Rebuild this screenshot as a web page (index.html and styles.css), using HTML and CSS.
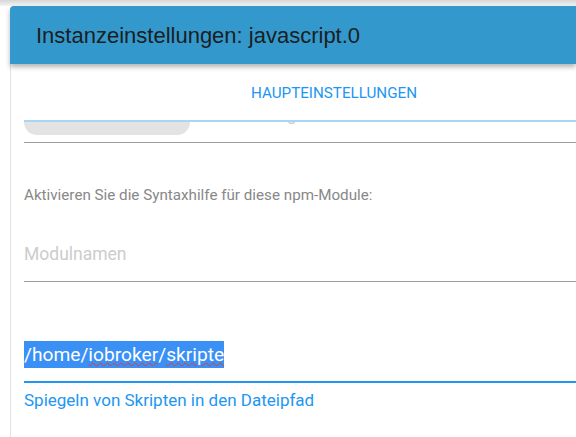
FILE: index.html
```html
<!DOCTYPE html>
<html lang="de">
<head>
  <meta charset="UTF-8">
  <title>Instanzeinstellungen</title>
  <link rel="stylesheet" href="styles.css">
</head>
<body>
  <div class="backdrop"></div>

  <div class="dialog">
    <!-- Header -->
    <header class="dialog-header">
      <h1>Instanzeinstellungen: javascript.0</h1>
    </header>

    <!-- Tabs -->
    <nav class="tabs">
      <span class="tab active">HAUPTEINSTELLUNGEN</span>
    </nav>

    <div class="content">
      <!-- scrolled-away field -->
      <div class="clipped-field">
        <div class="chip"></div>
        <span class="clipped-text">g</span>
      </div>

      <div class="field">
        <label class="field-label">Aktivieren Sie die Syntaxhilfe für diese npm-Module:</label>
        <div class="input placeholder">Modulnamen</div>
      </div>

      <div class="field focused">
        <div class="input path"><span class="selected">/home/<span class="misspelled">iobroker</span>/<span class="misspelled">skripte</span></span></div>
        <div class="helper">Spiegeln von Skripten in den Dateipfad</div>
      </div>
    </div>
  </div>
</body>
</html>
```

FILE: styles.css
```css
:root {
  --header: #3399cc;
  --accent: #2196f3;
  --line: #9e9e9e;
}

* {
  margin: 0;
  padding: 0;
  box-sizing: border-box;
}

body {
  background: #fff;
  font-family: Roboto, "Noto Sans", sans-serif;
  overflow: hidden;
  width: 576px;
  height: 437px;
}

.backdrop {
  height: 6px;
  background: linear-gradient(#d6d6d6, #f4f4f4);
}

/* Dialog */
.dialog {
  margin-left: 10px;
  border-left: 1px solid #e2e2e2;
  border-top-left-radius: 4px;
  height: 431px;
}

.dialog-header {
  background: var(--header);
  height: 58px;
  display: flex;
  align-items: center;
  padding-left: 26px;
  border-top-left-radius: 4px;
  margin-left: -1px;
  box-shadow: 0 3px 5px rgba(0,0,0,0.3);
  position: relative;
}

.dialog-header h1 {
  font-family: "Liberation Sans", Arial, sans-serif;
  font-weight: 400;
  font-size: 22px;
  line-height: 25px;
  color: #1b1e22;
}

/* Tabs */
.tabs {
  height: 56px;
  display: flex;
  align-items: center;
  padding-left: 240px;
}

.tab {
  font-size: 15.2px;
  line-height: 18px;
  color: var(--accent);
  padding-top: 1px;
}

/* Content */
.content {
  padding-left: 13px;
}

.clipped-field {
  height: 23px;
  border-top: 2px solid #a8d6f6;
  border-bottom: 1px solid var(--line);
  position: relative;
  overflow: hidden;
}

.chip {
  width: 166px;
  height: 13px;
  background: #e3e3e3;
  border-radius: 0 0 13px 13px;
}

.clipped-text {
  position: absolute;
  left: 263px;
  top: -17px;
  font-size: 17px;
  line-height: 20px;
  color: #c8c8c8;
}

.field {
  padding-top: 43px;
}

.field-label {
  display: block;
  font-size: 15.2px;
  line-height: 18px;
  color: #888;
}

.input {
  border-bottom: 1px solid var(--line);
}

.placeholder {
  margin-top: 40px;
  font-size: 17.5px;
  line-height: 20px;
  color: #ccc;
  padding-bottom: 17px;
}

.focused {
  padding-top: 60px;
}

.path {
  border-bottom: 2px solid var(--accent);
  font-size: 19.2px;
  line-height: 26px;
  padding-bottom: 13px;
}

.selected {
  background: #3b90f6;
  color: #fff;
  padding: 2px 0;
}

.misspelled {
  text-decoration: underline wavy #e53935;
  text-decoration-thickness: 1px;
  text-underline-offset: 1px;
}

.helper {
  margin-top: 7px;
  font-size: 17px;
  line-height: 20px;
  color: var(--accent);
}
```
